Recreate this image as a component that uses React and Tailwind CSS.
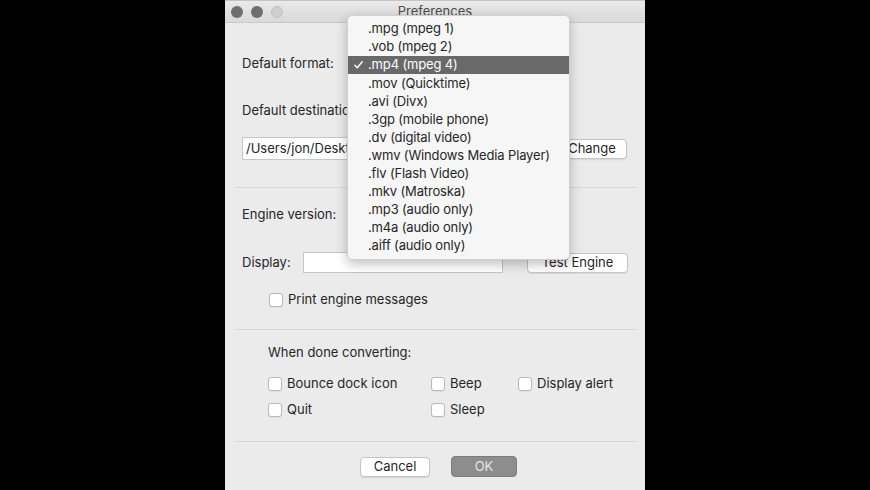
const formats = [
  ".mpg (mpeg 1)",
  ".vob (mpeg 2)",
  ".mp4 (mpeg 4)",
  ".mov (Quicktime)",
  ".avi (Divx)",
  ".3gp (mobile phone)",
  ".dv (digital video)",
  ".wmv (Windows Media Player)",
  ".flv (Flash Video)",
  ".mkv (Matroska)",
  ".mp3 (audio only)",
  ".m4a (audio only)",
  ".aiff (audio only)",
];

const Checkbox = ({ label, className = "" }) => (
  <label className={`flex items-center gap-[5px] ${className}`}>
    <span className="w-[14px] h-[14px] bg-white border border-[#b9b9b9] rounded-[3px] shadow-[0_1px_0_rgba(0,0,0,0.05)]" />
    <span>{label}</span>
  </label>
);

const Separator = ({ className = "" }) => (
  <div className={`h-px bg-[#d6d6d6] ml-[11px] mr-[9px] ${className}`} />
);

const App = () => {
  return (
    <div
      className="w-full h-[490px] bg-black flex justify-center overflow-hidden text-[13px] text-[#262626]"
      style={{ fontFamily: "Inter, 'Liberation Sans', sans-serif" }}
    >
      <div className="relative w-[420px] h-[490px] bg-[#ebebeb] flex flex-col">
        {/* title bar */}
        <div className="h-[23px] shrink-0 bg-gradient-to-b from-[#eaeaea] to-[#d9d9d9] border-t border-[#c4c4c4] border-b border-b-[#c9c9c9] flex items-center relative">
          <div className="flex items-center gap-[8px] pl-[6px]">
            <span className="w-[12px] h-[12px] rounded-full bg-[#6f6f6f]" />
            <span className="w-[12px] h-[12px] rounded-full bg-[#6f6f6f]" />
            <span className="w-[12px] h-[12px] rounded-full bg-[#cfcfcf] border border-[#c0c0c0]" />
          </div>
          <div className="absolute inset-0 flex items-center justify-center text-[#4d4d4d]">
            Preferences
          </div>
        </div>

        <div className="pl-[17px] pr-[17px] flex flex-col">
          <div className="h-[18px] mt-[32px] flex items-center">Default format:</div>
          <div className="h-[18px] mt-[29px] flex items-center">Default destination:</div>
          <div className="h-[23px] mt-[17px] flex items-center gap-[7px]">
            <div className="w-[308px] h-[23px] bg-white border border-[#c6c6c6] flex items-center pl-[3px] overflow-hidden whitespace-nowrap">
              /Users/jon/Desktop/
            </div>
            <button className="w-[70px] h-[20px] bg-white border border-[#c4c4c4] rounded-[4px] shadow-[0_1px_1px_rgba(0,0,0,0.08)] flex items-center justify-center">
              Change
            </button>
          </div>
        </div>

        <Separator className="mt-[27px]" />

        <div className="pl-[17px] pr-[17px] flex flex-col">
          <div className="h-[18px] mt-[18px] flex items-center">Engine version:</div>
          <div className="h-[21px] mt-[28px] flex items-center">
            <span className="w-[61px]">Display:</span>
            <div className="w-[200px] h-[21px] bg-white border border-[#c6c6c6]" />
            <button className="ml-[24px] w-[101px] h-[20px] bg-white border border-[#c4c4c4] rounded-[4px] shadow-[0_1px_1px_rgba(0,0,0,0.08)] flex items-center justify-center">
              Test Engine
            </button>
          </div>
          <div className="h-[18px] mt-[18px] flex items-center pl-[27px]">
            <Checkbox label="Print engine messages" />
          </div>
        </div>

        <Separator className="mt-[20px]" />

        <div className="pl-[43px] flex flex-col">
          <div className="h-[18px] mt-[14px] flex items-center">When done converting:</div>
          <div className="h-[18px] mt-[13px] flex items-center">
            <Checkbox label="Bounce dock icon" className="w-[163px]" />
            <Checkbox label="Beep" className="w-[87px]" />
            <Checkbox label="Display alert" />
          </div>
          <div className="h-[18px] mt-[8px] flex items-center">
            <Checkbox label="Quit" className="w-[163px]" />
            <Checkbox label="Sleep" />
          </div>
        </div>

        <Separator className="mt-[22px]" />

        <div className="mt-[14px] flex items-center pl-[135px] gap-[21px]">
          <button className="w-[70px] h-[20px] bg-white border border-[#c4c4c4] rounded-[4px] shadow-[0_1px_1px_rgba(0,0,0,0.1)] flex items-center justify-center">
            Cancel
          </button>
          <button className="w-[66px] h-[21px] bg-[#8d8d8d] border border-[#7d7d7d] rounded-[4px] text-[#e6e6e6] flex items-center justify-center">
            OK
          </button>
        </div>

        {/* popup menu */}
        <div className="absolute left-[122px] top-[15px] w-[223px] py-[4px] bg-[#f6f6f6] border border-[#cfcfcf] rounded-[5px] shadow-[0_4px_12px_rgba(0,0,0,0.25)] tracking-[-0.15px]">
          {formats.map((f, i) => {
            const selected = i === 2;
            return (
              <div
                key={f}
                className={`h-[18.1px] flex items-center pl-[20px] relative whitespace-nowrap ${
                  selected ? "bg-[#696969] text-white" : "text-[#262626]"
                }`}
              >
                {selected && (
                  <span className="absolute left-[6px] top-0 h-full flex items-center">
                    <svg width="9" height="8" viewBox="0 0 9 8" fill="none">
                      <path d="M0.8 4.2 L3.3 6.8 L8.2 0.8" stroke="white" strokeWidth="1.4" strokeLinecap="round" strokeLinejoin="round" />
                    </svg>
                  </span>
                )}
                {f}
              </div>
            );
          })}
        </div>
      </div>
    </div>
  );
};

export default App;
